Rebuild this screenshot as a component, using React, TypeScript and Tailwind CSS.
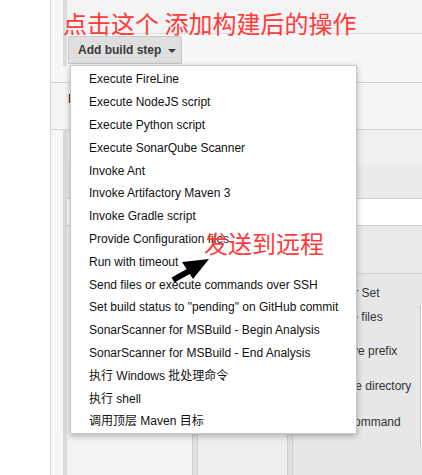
const items = [
  "Execute FireLine",
  "Execute NodeJS script",
  "Execute Python script",
  "Execute SonarQube Scanner",
  "Invoke Ant",
  "Invoke Artifactory Maven 3",
  "Invoke Gradle script",
  "Provide Configuration files",
  "Run with timeout",
  "Send files or execute commands over SSH",
  'Set build status to "pending" on GitHub commit',
  "SonarScanner for MSBuild - Begin Analysis",
  "SonarScanner for MSBuild - End Analysis",
  "执行 Windows 批处理命令",
  "执行 shell",
  "调用顶层 Maven 目标",
];

const BuildStepMenu = () => (
  <div className="absolute left-[70px] top-[65px] w-[287px] bg-white border border-[#c6c6c6] shadow-[0_2px_6px_rgba(0,0,0,0.28)] pt-[2px]">
    {items.map((label) => (
      <div key={label} className="h-[22.8px] flex items-center pl-[18px] text-[12px] text-[#111] whitespace-nowrap">
        {label}
      </div>
    ))}
  </div>
);

const FieldRow = ({ label, h, pl, input }: { label: string; h: string; pl: string; input?: boolean }) => (
  <div className={`flex ${h}`}>
    <div className={`flex-1 ${pl} flex items-center text-[12px] text-[#333] whitespace-nowrap overflow-hidden`}>{label}</div>
    <div className={input ? "w-[2px] border-l border-[#c4c4c4] bg-white" : "w-[2px]"} />
  </div>
);

export default function App() {
  return (
    <div className="relative w-[422px] h-[475px] overflow-hidden bg-white flex font-['Liberation_Sans','Noto_Sans_CJK_SC',sans-serif]">
      <div className="w-[50px] shrink-0" />
      <div className="flex-1 border-l border-[#d2d2d2] bg-[#f7f7f7] flex flex-col">
        {/* Build section */}
        <div className="ml-[12px] border-l-4 border-[#dcdcdc] h-[66px] flex flex-col">
          <div className="h-[34px] border-b border-[#dedede] bg-[#f4f4f4]" />
          <div className="pl-[1px] pt-[2px]">
            <button className="h-[28px] w-[114px] flex items-center pl-[9px] bg-[#dfdfdf] border border-[#c8c8c8] rounded-t-[2px] text-[12px] font-bold text-[#3a3a3a] whitespace-nowrap">
              Add build step
              <svg width="8" height="4" viewBox="0 0 8 4" className="ml-[7px] mt-[2px]">
                <path d="M0 0h8L4 4z" fill="#3a3a3a" />
              </svg>
            </button>
          </div>
        </div>
        <div className="h-[17px] border-b border-[#d6d6d6]" />

        {/* Post-build heading */}
        <div className="h-[47px] border-b border-[#d6d6d6] bg-[#f5f5f5] pl-[17px] pt-[6px] text-[13px] font-bold text-[#333] whitespace-nowrap">
          Post-build Actions
        </div>

        {/* Post-build step */}
        <div className="flex-1 ml-[12px] border-l-4 border-[#dcdcdc] flex flex-col">
          <div className="h-[35px] bg-[#f0f0f0]" />
          <div className="h-[34px] bg-[#ebebeb] border-b border-[#cdcdcd]" />
          <div className="h-[27px] bg-white border-b border-[#cdcdcd]" />
          <div className="flex-1 flex">
            <div className="w-[125px] bg-[#f3f3f3]" />
            <div className="w-[6px] bg-[#e2e2e2] border-x border-[#d0d0d0]" />
            <div className="w-[89px] bg-[#eeeeee]" />
            <div className="w-[6px] bg-[#e0e0e0] border-x border-[#cfcfcf]" />
            <div className="flex-1 bg-[#e7e7e7] flex flex-col">
              <div className="h-[48px] bg-[#eaeaea] border-b border-[#d2d2d2]" />
              <FieldRow label="Transfer Set" h="h-[31px] pt-[7px]" pl="pl-[21px]" />
              <FieldRow label="Source files" h="h-[23px]" pl="pl-[27px]" input />
              <FieldRow label="Remove prefix" h="h-[46px]" pl="pl-[27px]" input />
              <FieldRow label="Remote directory" h="h-[24px]" pl="pl-[27px]" input />
              <FieldRow label="Exec command" h="h-[48px]" pl="pl-[25px]" input />
              <div className="flex-1" />
            </div>
          </div>
        </div>
      </div>

      <BuildStepMenu />

      {/* annotations */}
      <div className="absolute left-[63px] top-[9px] text-[24px] leading-[28px] text-[#ff3b3b] whitespace-nowrap font-['Noto_Sans_CJK_SC',sans-serif]">
        点击这个 添加构建后的操作
      </div>
      <div className="absolute left-[204px] top-[229px] text-[24px] leading-[28px] text-[#ff3b3b] whitespace-nowrap font-['Noto_Sans_CJK_SC',sans-serif]">
        发送到远程
      </div>
      <svg className="absolute left-[160px] top-[250px]" width="52" height="36" viewBox="0 0 52 36">
        <line x1="13" y1="30" x2="31" y2="20" stroke="#000" strokeWidth="6" />
        <polygon points="49,9 22,12 33,29" fill="#000" />
      </svg>
    </div>
  );
}
